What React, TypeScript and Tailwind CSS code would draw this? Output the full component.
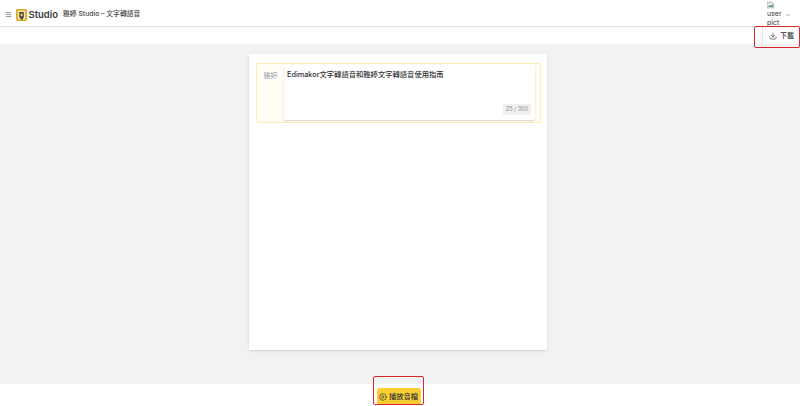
import { Download, ChevronDown, CirclePlay, Menu } from 'lucide-react';

const font = { fontFamily: '"Inter", "Liberation Sans", "Noto Sans CJK TC", sans-serif' };

function Logo() {
  return (
    <svg width="11" height="12" viewBox="0 0 11 12">
      <path d="M2 0.8h7a1.2 1.2 0 0 1 1.2 1.2v8a1.2 1.2 0 0 1-1.2 1.2H2A1.2 1.2 0 0 1 0.8 10V2A1.2 1.2 0 0 1 2 0.8z" fill="#f7e7ad" stroke="#d9a520" strokeWidth="1.6" />
      <path d="M3.2 3h4.6v5L6.6 10.6H5.2L3.2 8z" fill="#4a4440" />
      <path d="M4.6 4.6h1.9v2.6H4.6z" fill="#f4d35e" />
    </svg>
  );
}

function BrokenImage() {
  return (
    <svg width="8" height="8" viewBox="0 0 8 8" className="block">
      <path d="M0 1h5l2 2v4H0z" fill="#dfe8f2" stroke="#9aa7b5" strokeWidth="0.6" />
      <path d="M1 6l2-2 1 1 2-2v3z" fill="#4f9a5a" />
    </svg>
  );
}

export default function App() {
  return (
    <div className="relative flex flex-col h-[406px] w-[800px] overflow-hidden bg-white text-[#333]" style={font}>
      {/* Header */}
      <div className="flex h-[27px] shrink-0 items-center border-b border-[#e4e4e4] bg-white pl-[5px] pt-[3px]">
        <Menu size={7} strokeWidth={3} className="text-[#888]" />
        <div className="ml-[4px] flex items-center gap-[1.5px]">
          <Logo />
          <span className="text-[9.5px] leading-none font-semibold text-[#3a3a3a]">Studio</span>
        </div>
        <span className="ml-[5px] text-[6.8px] leading-none font-medium text-[#444]">雅婷 Studio – 文字轉語音</span>
        <div className="ml-auto flex items-center pr-[9px]">
          <div className="-mt-[3px] h-[26px] w-[15px] overflow-hidden pt-[1px] text-[7px] leading-[9px] text-[#333]">
            <BrokenImage />
            <div>user</div>
            <div>pict</div>
          </div>
          <ChevronDown size={6} strokeWidth={2.5} className="ml-[3px] text-[#777]" />
        </div>
      </div>

      {/* Toolbar */}
      <div className="flex h-[17px] shrink-0 items-center justify-end bg-white pr-[6px]">
        <div className="flex h-full items-center gap-[3px] border-l border-[#e4e4e4] pl-[6px]">
          <Download size={8} strokeWidth={2} className="text-[#444]" />
          <span className="text-[7px] leading-none font-medium text-[#333]">下載</span>
        </div>
      </div>

      {/* Main */}
      <div className="flex min-h-0 flex-1 justify-center bg-[#f2f2f2] pr-[4px] pt-[10px]">
        <div className="h-[296px] w-[298px] bg-white pl-[7px] pr-[6px] pt-[9px] shadow-sm">
          <div className="flex h-[60px] rounded-[2px] border-[1.5px] border-[#fbeeb4] bg-[#fffdf4] pr-[5px] pt-[1px]">
            <div className="w-[27px] shrink-0 pl-[6px] pt-[5px]">
              <div className="flex h-[11px] w-[15px] items-center justify-center bg-white text-[7px] leading-none text-[#999]">雅婷</div>
            </div>
            <div className="relative h-[55px] flex-1 rounded-[2px] bg-white pl-[3px] pt-[4px] shadow-[0_1px_2px_rgba(0,0,0,0.18)]">
              <p className="text-[7.3px] leading-[11px] font-medium text-[#333]">Edimakor文字轉語音和雅婷文字轉語音使用指南</p>
              <span className="absolute right-[4px] bottom-[5px] rounded-[1px] bg-[#f0f0f0] px-[3px] py-[2px] text-[5.5px] leading-[7px] text-[#888]">25 / 300</span>
            </div>
          </div>
        </div>
      </div>

      {/* Footer */}
      <div className="flex h-[22px] shrink-0 items-start justify-center bg-white pr-[3px]">
        <button className="mt-[4px] flex h-[17px] w-[44px] items-center justify-center gap-[2px] rounded-[3px] bg-[#fbcf33] text-[7.3px] leading-none font-medium text-[#333]">
          <CirclePlay size={8} strokeWidth={2} />
          播放音檔
        </button>
      </div>

      {/* Red callouts drawn over the screenshot */}
      <div className="absolute left-[754px] top-[26px] h-[22px] w-[46px] rounded-[2px] border-[1.5px] border-[#d8262c]" />
      <div className="absolute left-[373px] top-[376px] h-[29px] w-[51px] rounded-[2px] border-[1.5px] border-[#d8262c]" />
    </div>
  );
}
